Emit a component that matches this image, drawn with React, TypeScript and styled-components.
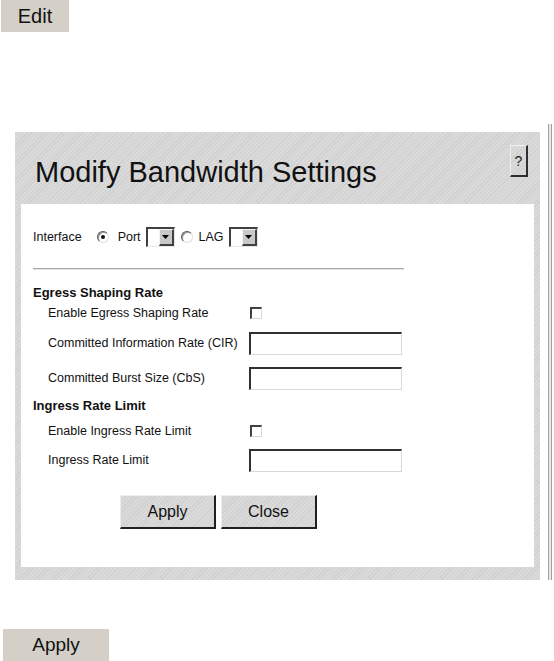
import React from 'react';
import styled, { createGlobalStyle, css } from 'styled-components';

const GlobalStyle = createGlobalStyle`
  html, body {
    margin: 0;
    padding: 0;
    background: #ffffff;
  }
  body {
    font-family: "Liberation Sans", Arial, sans-serif;
    color: #111;
  }
`;

const Page = styled.div`
  width: 554px;
  height: 661px;
  overflow: hidden;
`;

const FlatButton = styled.button<{ $w: number; $size: number }>`
  display: flex;
  align-items: center;
  justify-content: center;
  width: ${p => p.$w}px;
  height: 32px;
  padding: 0;
  border: none;
  background: #d4d0c8;
  font-family: "Liberation Sans", Arial, sans-serif;
  font-size: ${p => p.$size}px;
  color: #111;
`;

const TopBar = styled.div`
  height: 132px;
  padding-left: 1px;
`;

const Frame = styled.div`
  display: flex;
  align-items: flex-start;
`;

const hatch = css`
  background-color: #d6d6d6;
  background-image: repeating-linear-gradient(
    135deg,
    #d0d0d0 0px,
    #d0d0d0 1px,
    #dadada 1px,
    #dadada 3px
  );
`;

const Panel = styled.div`
  margin-left: 15px;
  width: 525px;
  height: 448px;
  box-sizing: border-box;
  padding: 0 6px 13px 6px;
  display: flex;
  flex-direction: column;
  ${hatch};
`;

const PanelHeader = styled.div`
  height: 72px;
  display: flex;
  justify-content: space-between;
  align-items: flex-start;
  padding-left: 14px;
  padding-right: 6px;
`;

const Title = styled.h1`
  margin: 24px 0 0 0;
  font-size: 29px;
  font-weight: normal;
  color: #111;
  line-height: 33px;
`;

const HelpButton = styled.button`
  margin-top: 13px;
  width: 18px;
  height: 32px;
  padding: 0;
  box-sizing: border-box;
  ${hatch};
  border-style: solid;
  border-width: 1px 2px 2px 1px;
  border-color: #f0f0f0 #303030 #303030 #f0f0f0;
  font-family: "Liberation Sans", Arial, sans-serif;
  font-size: 14px;
  color: #222;
`;

const Body = styled.div`
  flex: 1;
  background: #ffffff;
  padding: 22px 0 0 12px;
`;

const InterfaceRow = styled.div`
  display: flex;
  align-items: center;
  height: 22px;
`;

const Label = styled.span<{ $ml?: number }>`
  margin-left: ${p => p.$ml ?? 0}px;
  font-size: 12.5px;
  color: #111;
  white-space: nowrap;
`;

const Radio = styled.span<{ $checked?: boolean; $ml?: number }>`
  position: relative;
  display: inline-block;
  flex: none;
  box-sizing: border-box;
  width: 12px;
  height: 12px;
  margin-left: ${p => p.$ml ?? 0}px;
  border-radius: 50%;
  background: #fff;
  border: 1px solid;
  border-color: #555 #e0e0e0 #e0e0e0 #555;
  box-shadow: inset 1px 1px 0 #999;
  &::after {
    content: '';
    display: ${p => (p.$checked ? 'block' : 'none')};
    position: absolute;
    left: 3px;
    top: 3px;
    width: 4px;
    height: 4px;
    border-radius: 50%;
    background: #111;
  }
`;

const Select = styled.span<{ $ml?: number }>`
  display: inline-flex;
  flex: none;
  align-items: stretch;
  justify-content: flex-end;
  box-sizing: border-box;
  width: 29px;
  height: 20px;
  margin-left: ${p => p.$ml ?? 0}px;
  background: #fff;
  border-style: solid;
  border-width: 2px 1px 1px 2px;
  border-color: #404040 #e8e8e8 #e8e8e8 #404040;
`;

const SelectArrow = styled.span`
  display: flex;
  align-items: center;
  justify-content: center;
  width: 15px;
  box-sizing: border-box;
  background: #c8c8c8;
  border-style: solid;
  border-width: 1px 2px 2px 1px;
  border-color: #f4f4f4 #404040 #404040 #f4f4f4;
`;

const Separator = styled.div`
  width: 371px;
  height: 2px;
  margin-top: 20px;
  background: #a8a8a8;
  border-bottom: 1px solid #e4e4e4;
  box-sizing: border-box;
`;

const Form = styled.div`
  margin-top: 11px;
  display: flex;
  flex-direction: column;
`;

const Row = styled.div<{ $h: number }>`
  display: flex;
  align-items: center;
  height: ${p => p.$h}px;
`;

const Heading = styled.div`
  font-size: 13px;
  font-weight: bold;
  color: #111;
  white-space: nowrap;
`;

const FieldLabel = styled.span`
  flex: none;
  width: 216px;
  padding-left: 15px;
  box-sizing: border-box;
  font-size: 12.5px;
  color: #111;
  white-space: nowrap;
`;

const Checkbox = styled.span`
  display: inline-block;
  flex: none;
  box-sizing: border-box;
  width: 12px;
  height: 12px;
  margin-left: 1px;
  background: #fff;
  border-style: solid;
  border-width: 2px 1px 1px 2px;
  border-color: #404040 #d8d8d8 #d8d8d8 #404040;
`;

const TextInput = styled.input`
  flex: none;
  box-sizing: border-box;
  width: 153px;
  height: 23px;
  padding: 0 3px;
  margin: 0;
  background: #fff;
  outline: none;
  border-style: solid;
  border-width: 2px 1px 1px 2px;
  border-color: #303030 #d8d8d8 #d8d8d8 #303030;
`;

const Actions = styled.div`
  display: flex;
  gap: 5px;
  margin-top: 20px;
  padding-left: 87px;
`;

const DialogButton = styled.button`
  width: 96px;
  height: 34px;
  padding: 0;
  box-sizing: border-box;
  ${hatch};
  border-style: solid;
  border-width: 1px 2px 2px 1px;
  border-color: #ececec #202020 #202020 #ececec;
  font-family: "Liberation Sans", Arial, sans-serif;
  font-size: 16px;
  color: #111;
`;

const Divider = styled.div`
  margin-left: 8px;
  width: 4px;
  height: 456px;
  margin-top: -8px;
  box-sizing: border-box;
  border-left: 1px solid #a0a0a0;
  border-right: 1px solid #a0a0a0;
  background: #e8e8e8;
`;

const BottomBar = styled.div`
  margin-top: 49px;
  padding-left: 3px;
`;

const Arrow = () => (
  <svg width="7" height="4" viewBox="0 0 7 4">
    <path d="M0 0 H7 L3.5 4 Z" fill="#000" />
  </svg>
);

const SelectBox: React.FC<{ ml?: number }> = ({ ml }) => (
  <Select $ml={ml}>
    <SelectArrow>
      <Arrow />
    </SelectArrow>
  </Select>
);

export default function App() {
  return (
    <Page>
      <GlobalStyle />
      <TopBar>
        <FlatButton $w={68} $size={20}>Edit</FlatButton>
      </TopBar>
      <Frame>
        <Panel>
          <PanelHeader>
            <Title>Modify Bandwidth Settings</Title>
            <HelpButton>?</HelpButton>
          </PanelHeader>
          <Body>
            <InterfaceRow>
              <Label>Interface</Label>
              <Radio $checked $ml={15} />
              <Label $ml={9}>Port</Label>
              <SelectBox ml={5} />
              <Radio $ml={6} />
              <Label $ml={6}>LAG</Label>
              <SelectBox ml={5} />
            </InterfaceRow>
            <Separator />
            <Form>
              <Row $h={22}>
                <Heading>Egress Shaping Rate</Heading>
              </Row>
              <Row $h={20}>
                <FieldLabel>Enable Egress Shaping Rate</FieldLabel>
                <Checkbox />
              </Row>
              <Row $h={40}>
                <FieldLabel>Committed Information Rate (CIR)</FieldLabel>
                <TextInput />
              </Row>
              <Row $h={30}>
                <FieldLabel>Committed Burst Size (CbS)</FieldLabel>
                <TextInput />
              </Row>
              <Row $h={24}>
                <Heading>Ingress Rate Limit</Heading>
              </Row>
              <Row $h={28}>
                <FieldLabel>Enable Ingress Rate Limit</FieldLabel>
                <Checkbox />
              </Row>
              <Row $h={30}>
                <FieldLabel>Ingress Rate Limit</FieldLabel>
                <TextInput />
              </Row>
            </Form>
            <Actions>
              <DialogButton>Apply</DialogButton>
              <DialogButton>Close</DialogButton>
            </Actions>
          </Body>
        </Panel>
        <Divider />
      </Frame>
      <BottomBar>
        <FlatButton $w={106} $size={19}>Apply</FlatButton>
      </BottomBar>
    </Page>
  );
}
